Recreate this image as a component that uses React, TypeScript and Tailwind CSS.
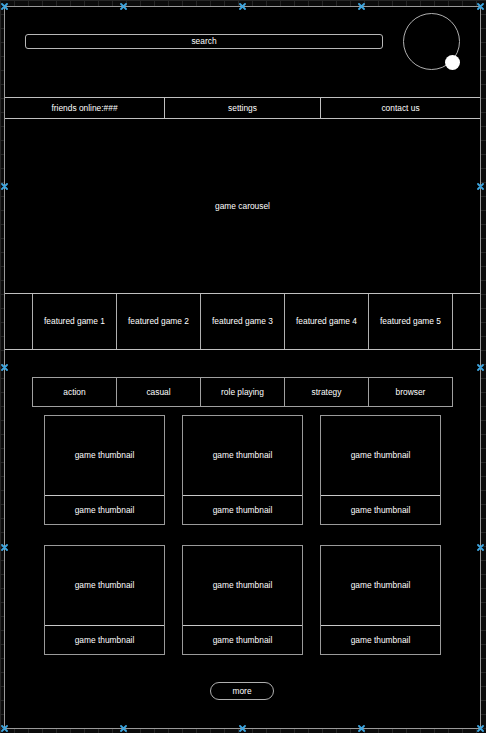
import React from "react";

const Marker = ({ x, y }: { x: number; y: number }) => (
  <svg
    className="absolute"
    style={{ left: x - 3, top: y - 3 }}
    width="7"
    height="7"
    viewBox="0 0 7 7"
  >
    <path d="M1 1L6 6M6 1L1 6" stroke="#3ea6e0" strokeWidth="1.8" strokeLinecap="round" />
  </svg>
);

const Card = () => (
  <div className="w-[121px] h-[110px] border border-[#9a9a9a] flex flex-col">
    <div className="h-[80px] flex items-center justify-center border-b border-[#c8c8c8]">game thumbnail</div>
    <div className="flex-1 flex items-center justify-center">game thumbnail</div>
  </div>
);

export default function App() {
  const xs = [4, 123, 242, 361, 480];
  const ys = [186, 367, 547];
  return (
    <div className="relative w-[486px] h-[733px] overflow-hidden bg-[#0b0b0b] bg-[linear-gradient(to_right,#262626_1px,transparent_1px),linear-gradient(to_bottom,#262626_1px,transparent_1px)] bg-[size:14px_14px] pt-[6px] pl-[4px] font-['Liberation_Sans',Arial,sans-serif] text-[8.4px] text-white">
      <div className="w-[477px] h-[723px] border border-[#9a9a9a] bg-black flex flex-col">
        {/* header */}
        <div className="h-[90px] flex items-start">
          <div className="ml-[20px] mt-[27px] w-[358px] h-[15px] border border-[#b8b8b8] rounded-[3px] flex items-center justify-center">
            search
          </div>
          <div className="relative ml-[20px] mt-[6px] w-[57px] h-[57px] rounded-full border border-[#b0b0b0]">
            <div className="absolute left-[41px] top-[41px] w-[15px] h-[15px] rounded-full bg-white" />
          </div>
        </div>
        {/* nav */}
        <div className="h-[22px] border-y border-[#c0c0c0] flex">
          <div className="w-[160px] border-r border-[#c0c0c0] flex items-center justify-center">friends online:###</div>
          <div className="w-[156px] border-r border-[#c0c0c0] flex items-center justify-center">settings</div>
          <div className="flex-1 flex items-center justify-center">contact us</div>
        </div>
        {/* carousel */}
        <div className="h-[174px] flex items-center justify-center">game carousel</div>
        {/* featured */}
        <div className="h-[57px] border-y border-[#c0c0c0] flex pl-[27px]">
          {[1, 2, 3, 4, 5].map((n) => (
            <div
              key={n}
              className={`w-[84px] border-l border-[#b0b0b0] flex items-center justify-center ${n === 5 ? "border-r w-[85px]" : ""}`}
            >
              featured game {n}
            </div>
          ))}
        </div>
        {/* tabs */}
        <div className="mt-[27px] ml-[27px] w-[421px] h-[30px] border border-[#a0a0a0] flex">
          {["action", "casual", "role playing", "strategy", "browser"].map((t, i) => (
            <div
              key={t}
              className={`${i < 4 ? "w-[84px] border-r border-[#a0a0a0]" : "flex-1"} flex items-center justify-center`}
            >
              {t}
            </div>
          ))}
        </div>
        {/* grid */}
        <div className="mt-[8px] ml-[39px] grid grid-cols-[121px_121px_121px] gap-x-[17px] gap-y-[20px]">
          <Card />
          <Card />
          <Card />
          <Card />
          <Card />
          <Card />
        </div>
        <div className="mt-[27px] ml-[205px] w-[64px] h-[18px] rounded-full border border-[#b0b0b0] flex items-center justify-center">
          more
        </div>
      </div>
      {xs.map((x) => (
        <React.Fragment key={x}>
          <Marker x={x} y={6} />
          <Marker x={x} y={728} />
        </React.Fragment>
      ))}
      {ys.map((y) => (
        <React.Fragment key={y}>
          <Marker x={4} y={y} />
          <Marker x={480} y={y} />
        </React.Fragment>
      ))}
    </div>
  );
}
